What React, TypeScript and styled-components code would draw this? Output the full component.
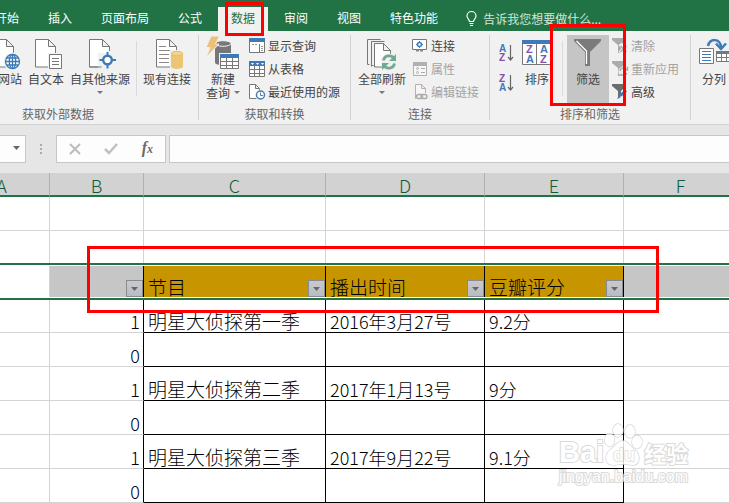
import React from "react";
import styled, { createGlobalStyle, css } from "styled-components";

const GlobalStyle = createGlobalStyle`
  * { box-sizing: border-box; }
  body {
    margin: 0;
    background: #ffffff;
    font-family: "Noto Sans CJK SC", "Liberation Sans", sans-serif;
    font-size: 12px;
    color: #444444;
  }
  button, input {
    font: inherit;
    color: inherit;
    margin: 0;
    padding: 0;
    border: 0;
    background: none;
  }
  svg { display: block; flex: none; overflow: visible; }
`;

const Page = styled.main`
  overflow: hidden;
`;

const mark = css`
  position: absolute;
  border: 3px solid #ff0000;
  pointer-events: none;
  z-index: 5;
`;

/* ---------- tabs ---------- */

const TabBar = styled.nav`
  display: flex;
  align-items: flex-end;
  gap: 3px;
  height: 31px;
  margin-left: -18px;
  background: #217346;
  color: #ffffff;
`;

const Tab = styled.button<{ $active?: boolean }>`
  position: relative;
  flex: none;
  height: 24px;
  padding: 0 13px 3px;
  line-height: 20px;
  white-space: nowrap;
  background: ${(p) => (p.$active ? "#f1f1f1" : "transparent")};
  color: ${(p) => (p.$active ? "#217346" : "#ffffff")};
`;

const TabMark = styled.span`
  ${mark}
  top: -5px;
  left: 7px;
  width: 39px;
  height: 34px;
`;

const TellMe = styled.button`
  display: flex;
  align-items: center;
  gap: 6px;
  height: 24px;
  padding: 0 0 2px 12px;
  color: #d3e6da;
  white-space: nowrap;
`;

/* ---------- ribbon ---------- */

const Ribbon = styled.section`
  display: flex;
  padding: 4px 0;
  margin-left: -82px;
  background: #f1f1f1;
  border-bottom: 1px solid #d2d2d2;
`;

const Group = styled.div<{ $min: number; $end?: boolean }>`
  display: flex;
  flex-direction: column;
  flex: none;
  min-width: ${(p) => p.$min}px;
  padding: 0 4px;
  border-right: 1px solid #d2d2d2;
  align-items: ${(p) => (p.$end ? "flex-end" : "flex-start")};
`;

const GroupBody = styled.div`
  display: flex;
  height: 73px;
`;

const GroupName = styled.div`
  align-self: center;
  line-height: 12px;
  color: #666666;
`;

const Divider = styled.span<{ $wide?: boolean }>`
  width: 1px;
  height: 55px;
  margin: 6px ${(p) => (p.$wide ? 4 : 3)}px 0 ${(p) => (p.$wide ? 6 : 3)}px;
  background: #dadada;
`;

const BigButton = styled.button<{ $pressed?: boolean }>`
  position: relative;
  display: flex;
  flex-direction: column;
  align-items: center;
  gap: 1px;
  height: 69px;
  min-width: ${(p) => (p.$pressed ? 42 : 38)}px;
  padding: 3px 3px 0;
  line-height: 15px;
  white-space: nowrap;
  background: ${(p) => (p.$pressed ? "#c5c5c5" : "transparent")};
`;

const ButtonLine = styled.span`
  display: flex;
  align-items: center;
  gap: 4px;
  min-height: 15px;
  margin-top: -2px;
`;

const FilterMark = styled.span`
  ${mark}
  top: -11px;
  left: -17px;
  width: 76px;
  height: 82px;
`;

const SmallList = styled.div<{ $wide?: boolean }>`
  display: flex;
  flex-direction: column;
  padding-left: ${(p) => (p.$wide ? 6 : 3)}px;
`;

const SmallButton = styled.button`
  display: flex;
  align-items: center;
  gap: 3px;
  height: 23px;
  padding-bottom: 1px;
  line-height: 16px;
  white-space: nowrap;
  &:disabled { color: #a3a3a3; }
`;

const SortList = styled.div`
  display: flex;
  flex-direction: column;
  padding: 3px 4px 0 5px;
`;

const SortButton = styled.button`
  display: flex;
  align-items: center;
  height: 30px;
`;

/* ---------- formula bar ---------- */

const FormulaBar = styled.section`
  display: flex;
  padding: 10px 0;
  margin-left: -80px;
  background: #e6e6e6;
`;

const barBox = css`
  height: 28px;
  background: #fdfdfd;
  border: 1px solid #c6c6c6;
`;

const NameBox = styled.div`
  ${barBox}
  display: flex;
  align-items: center;
  width: 106px;
`;

const NameInput = styled.input`
  flex: 1;
  min-width: 0;
  padding-left: 6px;
`;

const NameArrow = styled.button`
  padding: 0 5px 2px;
`;

const Grip = styled.span`
  display: flex;
  flex-direction: column;
  justify-content: center;
  gap: 2px;
  width: 30px;
  padding-left: 14px;
`;

const GripDot = styled.i`
  width: 2px;
  height: 2px;
  background: #aaaaaa;
`;

const FormulaTools = styled.div`
  ${barBox}
  display: flex;
  align-items: center;
  justify-content: space-between;
  width: 110px;
  margin-right: 3px;
  padding: 0 12px;
`;

const FxButton = styled.button`
  font: italic bold 16px/20px "Liberation Serif", serif;
  color: #6a6a6a;
  padding-bottom: 2px;
  sub { font-size: 12px; line-height: 1px; vertical-align: 0; }
`;

const FormulaInput = styled.input`
  && {
    ${barBox}
    flex: 1;
    min-width: 0;
    border-right: 0;
    padding: 0 6px;
  }
`;

/* ---------- sheet ---------- */

const Sheet = styled.section`
  position: relative;
  overflow: hidden;
`;

const Grid = styled.table`
  width: calc(100% + 55px);
  margin-left: -46px;
  table-layout: fixed;
  border-collapse: separate;
  border-spacing: 0;
  color: #000000;
`;

const Col = styled.col<{ $w?: number }>`
  width: ${(p) => (p.$w ? p.$w + "px" : "auto")};
`;

const ColumnHead = styled.th`
  height: 24px;
  padding: 2px 0 0;
  font-size: 18px;
  font-weight: 300;
  line-height: 20px;
  color: #0f5a36;
  background: #d2d2d2;
  border-right: 1px solid #b1b1b1;
  border-bottom: 2px solid #217346;
`;

const Row = styled.tr<{ $selected?: boolean }>`
  position: ${(p) => (p.$selected ? "relative" : "static")};
  height: 34px;
`;

const SelectionRing = styled.span`
  position: absolute;
  inset: -2px 0 -1px 0;
  border-top: 2px solid #217346;
  border-bottom: 2px solid #217346;
  box-shadow: inset 0 1px #ffffff, inset 0 -1px #ffffff;
  pointer-events: none;
`;

type Tone = "plain" | "grey" | "gold";
const tones: Record<Tone, string> = { plain: "#ffffff", grey: "#c6c6c6", gold: "#c69500" };

const Cell = styled.td<{ $right?: boolean; $bottom?: boolean; $tone?: Tone; $number?: boolean }>`
  padding: 0 3px 1px 4px;
  vertical-align: bottom;
  white-space: nowrap;
  font-size: ${(p) => (p.$number ? 18 : 19)}px;
  font-weight: 300;
  line-height: 20px;
  background: ${(p) => tones[p.$tone || "plain"]};
  border-right: 1px solid ${(p) => (p.$right ? "#000000" : "#d4d4d4")};
  border-bottom: 1px solid ${(p) => (p.$bottom ? "#000000" : "#d4d4d4")};
`;

const KeyCell = styled(Cell)`
  text-align: right;
`;

const TitleCell = styled(Cell)`
  padding: 0 0 1px 4px;
`;

const TitleBox = styled.div`
  display: flex;
  align-items: flex-end;
  justify-content: space-between;
  height: 20px;
`;

const DropButton = styled.button`
  display: flex;
  align-items: center;
  justify-content: center;
  width: 17px;
  height: 17px;
  margin-left: auto;
  background: linear-gradient(#c9c9ca, #b9bcc2);
  border: 1px solid #858a93;
`;

const RangeMark = styled.span`
  ${mark}
  top: 73px;
  left: 87px;
  width: 572px;
  height: 67px;
`;

/* ---------- watermark ---------- */

const Watermark = styled.div`
  position: absolute;
  top: 250px;
  left: 559px;
  color: #ffffff;
  -webkit-text-stroke: 2px #d4d4d4;
  paint-order: stroke fill;
  opacity: 0.85;
  pointer-events: none;
`;

const WatermarkTop = styled.div`
  display: flex;
  align-items: flex-end;
  height: 44px;
  font: bold 29px/30px "Liberation Sans", sans-serif;
`;

const WatermarkHan = styled.span`
  font: bold 22px/30px "Noto Sans CJK SC", sans-serif;
`;

const WatermarkUrl = styled.div`
  font: 16px/20px "Liberation Sans", sans-serif;
`;

/* ---------- icons ---------- */

const GREY = "#777777";
const BLUE = "#3e7ab8";
const PURPLE = "#8650a8";

const Caret = ({ color = "#666666" }: { color?: string }) => (
  <svg width="7" height="4" viewBox="0 0 7 4"><path d="M0 0h7L3.5 4z" fill={color} /></svg>
);

const SmallCaret = () => (
  <svg width="6" height="3" viewBox="0 0 6 3"><path d="M0 0h6L3 3z" fill="#777777" /></svg>
);

const Big = ({ children }: { children: React.ReactNode }) => (
  <svg width="32" height="32" viewBox="0 0 32 32">{children}</svg>
);

const Small = ({ children }: { children: React.ReactNode }) => (
  <svg width="16" height="16" viewBox="0 0 16 16">{children}</svg>
);

const Paper = () => (
  <path d="M5.500 1.500h13l7 7v20.500h-20zM18.500 1.500v7h7" fill="#fff" stroke={GREY} />
);

const WebIcon = () => (
  <Big>
    <Paper />
    <circle cx="24.500" cy="23.500" r="9" fill="#f1f1f1" />
    <g fill="#fff" stroke={BLUE} strokeWidth="1.300">
      <circle cx="24.500" cy="23.500" r="7" />
      <ellipse cx="24.500" cy="23.500" rx="3.200" ry="7" />
      <path d="M24.500 16.500v14M17.500 23.500h14M18.500 20h12M18.500 27h12" />
    </g>
  </Big>
);

const TextIcon = () => (
  <Big>
    <Paper />
    <path d="M18 15h14v17H18z" fill="#f1f1f1" />
    <path d="M19.500 16.500h12v14h-12z" fill="#fff" stroke={GREY} />
    <path d="M22 20.500h7M22 23.500h7M22 26.500h7" stroke={GREY} />
  </Big>
);

const SourceIcon = () => (
  <Big>
    <Paper />
    <path d="M14 15h9v-2h9v19H16v-2h-2z" fill="#f1f1f1" />
    <path d="M5.500 29h12" stroke={GREY} />
    <path d="M23.500 14v16.500M15.500 22h16.500" stroke={BLUE} strokeWidth="2" />
    <circle cx="23.500" cy="22" r="4.300" fill="#fff" stroke={BLUE} strokeWidth="2.400" />
  </Big>
);

const ConnectionIcon = () => (
  <Big>
    <Paper />
    <path d="M8 8.500h7M8 12.500h11M8 16.500h10M8 20.500h10M8 24.500h10" stroke="#8a8a8a" />
    <path d="M19 12h14v20H19z" fill="#f1f1f1" />
    <path d="M20 15.500v13c0 3.300 12 3.300 12 0v-13z" fill="#edc675" />
    <ellipse cx="26" cy="15.500" rx="5.700" ry="2.200" fill="#f3d48f" stroke="#e8bd64" />
  </Big>
);

const QueryIcon = () => (
  <Big>
    <path d="M8 5.500v19c0 3.500 16 3.500 16 0v-19z" fill="#777" />
    <ellipse cx="16" cy="5.500" rx="8" ry="2.800" fill="#777" stroke="#f1f1f1" />
    <path d="M4-2h8.500L8.500 6H12L-1 19.500 3 9.500h-4z" fill="#ecc07a" stroke="#f1f1f1" />
    <path d="M12 15h21v17H12z" fill="#f1f1f1" />
    <path d="M13.500 16.500h18v14h-18z" fill="#fff" stroke={GREY} />
    <path d="M19.500 20v11M25.500 20v11M13 23.500h19M13 27.500h19" stroke={GREY} />
    <path d="M13 16h19v4H13z" fill={BLUE} />
  </Big>
);

const ShowQueryIcon = () => (
  <Small>
    <path d="M.5.5h15v14H.5z" fill="#fff" stroke={GREY} />
    <path d="M0 0h16v4H0z" fill={BLUE} />
    <path d="M10.500 6v9" stroke={GREY} />
    <path d="M3 6.500h6M12 8.500h2M12 10.500h2M12 12.500h2" stroke="#999" strokeDasharray="2 1" />
  </Small>
);

const FromTableIcon = () => (
  <Small>
    <path d="M.5.5h15v15H.5z" fill="#fff" stroke={GREY} />
    <path d="M5.500 4v11M10.500 4v11M0 8.500h16M0 12.500h16" stroke={GREY} />
    <path d="M0 0h16v5H0z" fill={BLUE} />
    <path d="M2 2h3l-1.500 2zM7 2h3L8.500 4zM12 2h3l-1.500 2z" fill="#fff" />
  </Small>
);

const RecentIcon = () => (
  <Small>
    <path d="M.5.500h6l4 4V14.500H.5zM6.500.5v4h4" fill="#fff" stroke={GREY} />
    <circle cx="11.500" cy="11" r="5.500" fill="#f1f1f1" />
    <circle cx="11.500" cy="11" r="4" fill="#fff" stroke={BLUE} strokeWidth="1.400" />
    <path d="M11.500 8.500v3h2.500" fill="none" stroke={GREY} />
  </Small>
);

const RefreshIcon = () => (
  <Big>
    <path d="M1.500 26.500v-25h13M5.500 28.500v-25h13" fill="none" stroke={GREY} />
    <path d="M1.500 26.500h2M5.500 27.500h2" stroke={GREY} />
    <path d="M8.500 5.500h9l7 7V29h-16zM17.500 5.500v7h7" fill="#fff" stroke={GREY} />
    <circle cx="23" cy="24" r="8.500" fill="#f1f1f1" />
    <g fill="none" stroke="#70aa91" strokeWidth="2.800">
      <path d="M17.500 22.500c1-5.500 8-6 10.500-2" />
      <path d="M28.500 25.500c-1 5.500-8 6-10.500 2" />
    </g>
    <path d="M30 16v7h-7zM16 32v-7h7z" fill="#70aa91" />
  </Big>
);

const LinkIcon = () => (
  <Small>
    <path d="M.5 1.500h14v10H.5z" fill="#fff" stroke={GREY} />
    <circle cx="7.500" cy="6.500" r="2" fill="#fff" stroke={BLUE} strokeWidth="1.500" />
    <path d="M7.500 3v2M7.500 8v2M4 6.500h2M9 6.500h2" stroke={BLUE} />
    <path d="M4 12.500h3M8 12.500h3" stroke="#888" strokeWidth="2" />
  </Small>
);

const PropertiesIcon = () => (
  <Small>
    <path d="M1.500 1.500h13v13h-13z" fill="#f7f7f7" stroke="#b0b0b0" />
    <path d="M1 1h14v4H1z" fill="#b0b0b0" />
    <path d="M9 7.500h4M9 11.500h4" stroke="#aaa" />
    <circle cx="5.500" cy="7.500" r="1" fill="none" stroke="#aaa" />
    <circle cx="5.500" cy="11.500" r="1" fill="none" stroke="#aaa" />
  </Small>
);

const EditLinkIcon = () => (
  <Small>
    <path d="M3.500.5h6l4 4v10h-10zM9.500.5v4h4" fill="#f8f4f8" stroke="#b5b0b5" />
    <path d="M4 9h12v7H4z" fill="#f1f1f1" />
    <rect x="4.500" y="10.500" width="6" height="4" rx="2" fill="none" stroke="#aaa" strokeWidth="1.300" />
    <rect x="9" y="10.500" width="6" height="4" rx="2" fill="none" stroke="#aaa" strokeWidth="1.300" />
  </Small>
);

const letter = { fontFamily: "Liberation Sans, sans-serif", fontWeight: 700 } as const;

const SortGlyph = ({ top, bottom }: { top: "A" | "Z"; bottom: "A" | "Z" }) => (
  <svg width="15" height="18" viewBox="0 0 15 18">
    <text x="0" y="8" fontSize="10" {...letter} fill={top === "A" ? BLUE : PURPLE}>{top}</text>
    <text x="0" y="17" fontSize="10" {...letter} fill={bottom === "A" ? BLUE : PURPLE}>{bottom}</text>
    <path d="M11.500 1v15M9 13l2.500 3 2.500-3" fill="none" stroke="#666" strokeWidth="1.200" />
  </svg>
);

const SortIcon = () => (
  <Big>
    <path d="M1.500 2.500h29v24h-29zM15.500 6v20" fill="#fff" stroke={GREY} />
    <path d="M1 2h30v4H1z" fill={BLUE} />
    <g fontSize="11" {...letter}>
      <text x="5" y="15" fill={PURPLE}>Z</text>
      <text x="5" y="25" fill={BLUE}>A</text>
      <text x="19" y="15" fill={BLUE}>A</text>
      <text x="19" y="25" fill={PURPLE}>Z</text>
    </g>
  </Big>
);

const FunnelIcon = () => (
  <Big>
    <path d="M2 1h27v2L18 14v14h-5V14L2 3z" fill="#7b7b7b" />
    <path d="M4.500 3l10 10v13" fill="none" stroke="#fff" strokeWidth="1.300" />
  </Big>
);

const ClearIcon = () => (
  <Small>
    <path d="M0 0h14v2L9 7v8H6V7L0 2z" fill="#ababab" />
    <path d="M8 6l8 9M16 6l-8 9" stroke="#f1f1f1" strokeWidth="4" />
    <path d="M8.500 8l6 6M14.500 8l-6 6" stroke="#b0a8ae" strokeWidth="1.600" />
  </Small>
);

const ReapplyIcon = () => (
  <Small>
    <path d="M0 0h14v2L9 7v8H6V7L0 2z" fill="#ababab" />
    <circle cx="11.500" cy="10.500" r="5" fill="#f1f1f1" />
    <path d="M8 10c1-4 5-4 7-1M15 12c-1 3-5 3-6.500 1M15.500 5.500V9H12" fill="none" stroke="#aaa" strokeWidth="1.400" />
  </Small>
);

const AdvancedIcon = () => (
  <Small>
    <path d="M0 0h14v2L9 7v8H6V7L0 2z" fill="#6c6c6c" />
    <path d="M5 16l8-9 3 3-7 5z" fill="#f1f1f1" />
    <path d="M5 15l2-4 2 2z" fill={BLUE} />
    <path d="M8.500 11.500L14 6.500" stroke={BLUE} strokeWidth="3" />
  </Small>
);

const SplitIcon = () => (
  <Big>
    <path d="M10 8c2-8 12-8 13 1" fill="none" stroke={BLUE} strokeWidth="2.500" />
    <path d="M18 5.500l5 5.500 5-5.500" fill="none" stroke={BLUE} strokeWidth="2.500" />
    <path d="M1.500 10.500h14v15h-14z" fill="#fff" stroke={GREY} />
    <path d="M4 13.500h9M4 16.500h9M4 19.500h9M4 22.500h9" stroke={BLUE} />
    <path d="M18.500 13.500h14v10h-14z" fill="#fff" stroke={GREY} />
    <path d="M18 13h15v3H18z" fill={GREY} />
    <path d="M23.500 14v10M28.500 14v10M18 19.500h15" stroke={GREY} />
  </Big>
);

const BulbIcon = () => (
  <svg width="11" height="15" viewBox="0 0 11 15">
    <path d="M3.500 10.500c0-2-2.500-3-2.500-5.500a4.500 4.500 0 0 1 9 0c0 2.500-2.500 3.500-2.500 5.500zM3.500 12.500h4M4 14.500h3" fill="none" stroke="#fff" strokeWidth="1.200" />
  </svg>
);

const PawIcon = () => (
  <svg width="40" height="44" viewBox="0 0 40 44">
    <g fill="#fff" stroke="#cfcfcf" strokeWidth="1.300">
      <ellipse cx="14" cy="7.500" rx="5" ry="6.500" />
      <ellipse cx="26" cy="8.500" rx="5" ry="6.500" />
      <ellipse cx="5.500" cy="17" rx="5" ry="6.500" />
      <ellipse cx="33" cy="19" rx="5" ry="6.500" />
      <path d="M19 18c6 0 7 6 12 9 6 5 5 15-2 15-5 0-6-1-10-1s-5 1-10 1c-8 0-9-10-3-15 5-3 7-9 13-9z" />
    </g>
    <text x="9" y="38" fontSize="18" {...letter} fill="#fff" stroke="#c4c4c4">du</text>
  </svg>
);

/* ---------- data ---------- */

const columns = ["A", "B", "C", "D", "E", "F"];
const tabs = ["开始", "插入", "页面布局", "公式", "数据", "审阅", "视图", "特色功能"];
const titles = ["节目", "播出时间", "豆瓣评分"];
const rows: [number, string, string, string][] = [
  [1, "明星大侦探第一季", "2016年3月27号", "9.2分"],
  [0, "", "", ""],
  [1, "明星大侦探第二季", "2017年1月13号", "9分"],
  [0, "", "", ""],
  [1, "明星大侦探第三季", "2017年9月22号", "9.1分"],
  [0, "", "", ""],
];

const BlankRow = () => (
  <Row>
    {columns.map((c) => <Cell key={c} />)}
  </Row>
);

export default function App() {
  return (
    <Page>
      <GlobalStyle />
      <TabBar>
        {tabs.map((name) => (
          <Tab key={name} $active={name === "数据"}>
            {name}
            {name === "数据" && <TabMark />}
          </Tab>
        ))}
        <TellMe><BulbIcon />告诉我您想要做什么...</TellMe>
      </TabBar>

      <Ribbon>
        <Group $min={281} $end>
          <GroupBody>
            <BigButton><WebIcon />自网站</BigButton>
            <BigButton><TextIcon />自文本</BigButton>
            <BigButton><SourceIcon />自其他来源<ButtonLine><SmallCaret /></ButtonLine></BigButton>
            <Divider />
            <BigButton><ConnectionIcon />现有连接</BigButton>
          </GroupBody>
          <GroupName>获取外部数据</GroupName>
        </Group>

        <Group $min={152}>
          <GroupBody>
            <BigButton><QueryIcon />新建<ButtonLine>查询<SmallCaret /></ButtonLine></BigButton>
            <SmallList $wide>
              <SmallButton><ShowQueryIcon />显示查询</SmallButton>
              <SmallButton><FromTableIcon />从表格</SmallButton>
              <SmallButton><RecentIcon />最近使用的源</SmallButton>
            </SmallList>
          </GroupBody>
          <GroupName>获取和转换</GroupName>
        </Group>

        <Group $min={139}>
          <GroupBody>
            <BigButton><RefreshIcon />全部刷新<ButtonLine><SmallCaret /></ButtonLine></BigButton>
            <SmallList>
              <SmallButton><LinkIcon />连接</SmallButton>
              <SmallButton disabled><PropertiesIcon />属性</SmallButton>
              <SmallButton disabled><EditLinkIcon />编辑链接</SmallButton>
            </SmallList>
          </GroupBody>
          <GroupName>连接</GroupName>
        </Group>

        <Group $min={201}>
          <GroupBody>
            <SortList>
              <SortButton aria-label="升序"><SortGlyph top="A" bottom="Z" /></SortButton>
              <SortButton aria-label="降序"><SortGlyph top="Z" bottom="A" /></SortButton>
            </SortList>
            <BigButton><SortIcon />排序</BigButton>
            <Divider $wide />
            <BigButton $pressed aria-pressed="true"><FunnelIcon />筛选<FilterMark /></BigButton>
            <SmallList>
              <SmallButton disabled><ClearIcon />清除</SmallButton>
              <SmallButton disabled><ReapplyIcon />重新应用</SmallButton>
              <SmallButton><AdvancedIcon />高级</SmallButton>
            </SmallList>
          </GroupBody>
          <GroupName>排序和筛选</GroupName>
        </Group>

        <Group $min={60}>
          <GroupBody>
            <BigButton><SplitIcon />分列</BigButton>
          </GroupBody>
        </Group>
      </Ribbon>

      <FormulaBar>
        <NameBox>
          <NameInput aria-label="名称框" />
          <NameArrow aria-label="名称列表"><Caret /></NameArrow>
        </NameBox>
        <Grip><GripDot /><GripDot /><GripDot /></Grip>
        <FormulaTools>
          <button aria-label="取消">
            <svg width="12" height="12" viewBox="0 0 12 12"><path d="M1 1l10 10M11 1L1 11" stroke="#bcbcbc" strokeWidth="2" /></svg>
          </button>
          <button aria-label="输入">
            <svg width="14" height="12" viewBox="0 0 14 12"><path d="M1 6l4 4 8-9" fill="none" stroke="#c0c0c0" strokeWidth="2.500" /></svg>
          </button>
          <FxButton aria-label="插入函数">f<sub>x</sub></FxButton>
        </FormulaTools>
        <FormulaInput aria-label="编辑栏" />
      </FormulaBar>

      <Sheet>
        <Grid>
          <colgroup>
            <Col $w={96} /><Col $w={94} /><Col $w={182} /><Col $w={159} /><Col $w={139} /><Col />
          </colgroup>
          <thead>
            <tr>
              {columns.map((c) => <ColumnHead key={c} scope="col">{c}</ColumnHead>)}
            </tr>
          </thead>
          <tbody>
            <BlankRow />
            <BlankRow />
            <Row $selected>
              <Cell><SelectionRing /></Cell>
              <TitleCell $tone="grey" $right>
                <TitleBox><DropButton aria-label="筛选"><Caret /></DropButton></TitleBox>
              </TitleCell>
              {titles.map((t) => (
                <TitleCell key={t} $tone="gold" $right>
                  <TitleBox>{t}<DropButton aria-label={t + "筛选"}><Caret /></DropButton></TitleBox>
                </TitleCell>
              ))}
              <Cell $tone="grey" />
            </Row>
            {rows.map(([key, show, date, score], i) => (
              <Row key={i}>
                <Cell />
                <KeyCell $number $right>{key}</KeyCell>
                <Cell $right $bottom>{show}</Cell>
                <Cell $number $right $bottom>{date}</Cell>
                <Cell $number $right $bottom>{score}</Cell>
                <Cell />
              </Row>
            ))}
          </tbody>
        </Grid>
        <RangeMark />
        <Watermark aria-hidden="true">
          <WatermarkTop>Bai<PawIcon /><WatermarkHan>经验</WatermarkHan></WatermarkTop>
          <WatermarkUrl>jingyan.baidu.com</WatermarkUrl>
        </Watermark>
      </Sheet>
    </Page>
  );
}
